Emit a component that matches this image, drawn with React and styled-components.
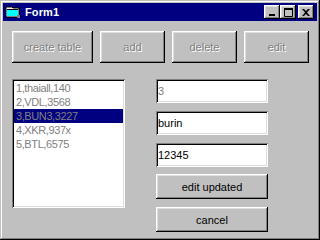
import React from "react";
import styled, { createGlobalStyle } from "styled-components";

const Global = createGlobalStyle`
  html, body { margin: 0; padding: 0; background: #c0c0c0; }
  body { font-family: "Liberation Sans", Arial, sans-serif; font-size: 11px; }
`;

const Window = styled.div`
  box-sizing: border-box;
  width: 320px;
  height: 240px;
  background: #c0c0c0;
  padding: 3px;
  box-shadow: inset -1px -1px #000, inset 1px 1px #c0c0c0, inset -2px -2px #808080, inset 2px 2px #fff;
  display: flex;
  flex-direction: column;
`;

const TitleBar = styled.div`
  height: 18px;
  background: #000080;
  display: flex;
  align-items: center;
  padding: 0 3px 0 2px;
  color: #fff;
`;

const TitleText = styled.span`
  font-weight: bold;
  font-size: 11px;
  margin-left: 4px;
  flex: 1;
  letter-spacing: 0.1px;
`;

const TitleBtn = styled.div`
  box-sizing: border-box;
  width: 16px;
  height: 14px;
  background: #c0c0c0;
  margin-left: ${(p) => p.$ml || 0}px;
  box-shadow: inset -1px -1px #000, inset 1px 1px #fff, inset -2px -2px #808080, inset 2px 2px #dfdfdf;
  display: flex;
  align-items: center;
  justify-content: center;
`;

const Client = styled.div`
  flex: 1;
  padding: 10px 0 0 9px;
  display: flex;
  flex-direction: column;
`;

const TopRow = styled.div`
  display: flex;
  gap: 7px;
`;

const Button = styled.button`
  box-sizing: border-box;
  width: ${(p) => p.$w}px;
  height: ${(p) => p.$h}px;
  background: #c0c0c0;
  border: none;
  padding: 0;
  font-family: "Liberation Sans", Arial, sans-serif;
  font-size: 11px;
  color: ${(p) => (p.disabled ? "#808080" : "#000")};
  text-shadow: ${(p) => (p.disabled ? "1px 1px #fff" : "none")};
  box-shadow: inset -1px -1px #000, inset 1px 1px #fff, inset -2px -2px #808080, inset 2px 2px #dfdfdf;
`;

const Body = styled.div`
  display: flex;
  margin-top: 16px;
`;

const ListBox = styled.div`
  box-sizing: border-box;
  width: 113px;
  height: 129px;
  background: #fff;
  padding: 2px;
  box-shadow: inset 1px 1px #808080, inset -1px -1px #fff, inset 2px 2px #000, inset -2px -2px #dfdfdf;
`;

const Item = styled.div`
  height: 14px;
  line-height: 14px;
  padding-left: 2px;
  font-size: 11px;
  letter-spacing: -0.4px;
  color: #808080;
  background: ${(p) => (p.$sel ? "#000080" : "transparent")};
  white-space: nowrap;
`;

const Side = styled.div`
  margin-left: 31px;
  display: flex;
  flex-direction: column;
`;

const Input = styled.div`
  box-sizing: border-box;
  width: 112px;
  height: 24px;
  background: #fff;
  padding: 0 2px;
  margin-bottom: ${(p) => p.$mb}px;
  display: flex;
  align-items: center;
  font-size: 11px;
  color: ${(p) => (p.$dim ? "#808080" : "#000")};
  box-shadow: inset 1px 1px #808080, inset -1px -1px #fff, inset 2px 2px #000, inset -2px -2px #dfdfdf;
`;

const Gap = styled.div`
  height: ${(p) => p.$h}px;
`;

const FormIcon = () => (
  <svg width="16" height="16" viewBox="0 0 16 16">
    <path d="M1 3h6l1 1h6v9H1z" fill="#fff" stroke="#000" strokeWidth="1" />
    <rect x="2" y="6" width="11" height="6" fill="#00ffff" />
    <rect x="2" y="5" width="11" height="1" fill="#000" />
    <rect x="12" y="11" width="3" height="3" fill="#808080" />
  </svg>
);

export default function App() {
  const items = ["1,thaiall,140", "2,VDL,3568", "3,BUN3,3227", "4,XKR,937x", "5,BTL,6575"];
  return (
    <>
      <Global />
      <Window>
        <TitleBar>
          <FormIcon />
          <TitleText>Form1</TitleText>
          <TitleBtn>
            <svg width="8" height="8" viewBox="0 0 8 8"><rect x="1" y="6" width="6" height="2" fill="#000" /></svg>
          </TitleBtn>
          <TitleBtn>
            <svg width="9" height="9" viewBox="0 0 9 9"><path d="M0.5 0.5h8v8h-8z" fill="none" stroke="#000" /><rect x="0" y="0" width="9" height="2" fill="#000" /></svg>
          </TitleBtn>
          <TitleBtn $ml={2}>
            <svg width="8" height="7" viewBox="0 0 8 7"><path d="M0 0h2l2 2 2-2h2L5 3.5 8 7H6L4 5 2 7H0l3-3.5z" fill="#000" /></svg>
          </TitleBtn>
        </TitleBar>
        <Client>
          <TopRow>
            <Button $w={81} $h={32} disabled>create table</Button>
            <Button $w={65} $h={32} disabled>add</Button>
            <Button $w={65} $h={32} disabled>delete</Button>
            <Button $w={65} $h={32} disabled>edit</Button>
          </TopRow>
          <Body>
            <ListBox>
              {items.map((t, i) => (
                <Item key={t} $sel={i === 2}>{t}</Item>
              ))}
            </ListBox>
            <Side>
              <Input $mb={8} $dim>3</Input>
              <Input $mb={8}>burin</Input>
              <Input $mb={7}>12345</Input>
              <Button $w={112} $h={25}>edit updated</Button>
              <Gap $h={8} />
              <Button $w={112} $h={25}>cancel</Button>
            </Side>
          </Body>
        </Client>
      </Window>
    </>
  );
}
